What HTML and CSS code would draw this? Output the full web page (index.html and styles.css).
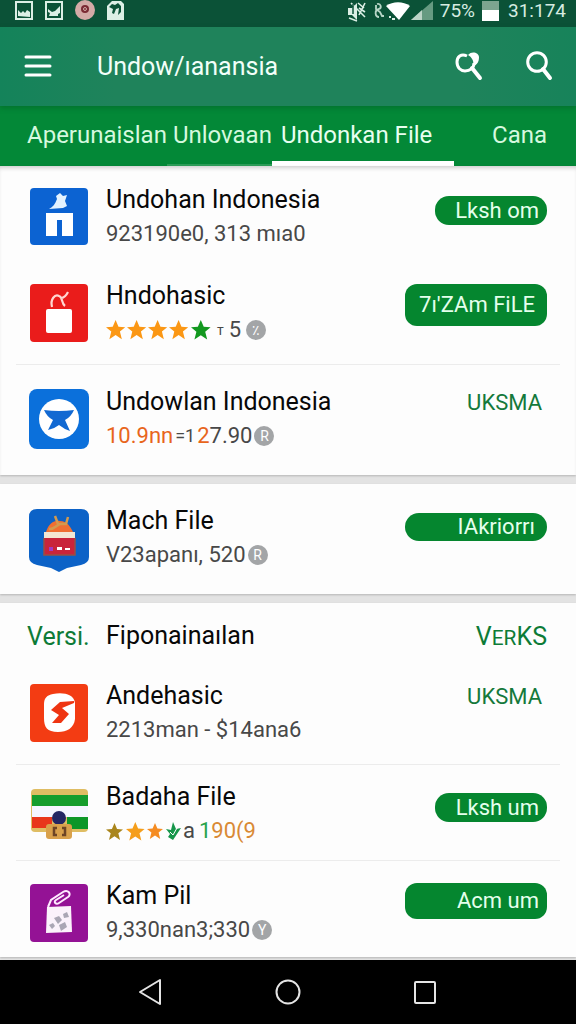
FILE: index.html
```html
<!DOCTYPE html>
<html lang="id">
<head>
<meta charset="utf-8">
<meta name="viewport" content="width=device-width, initial-scale=1">
<title>Undowlanansia</title>
<link rel="stylesheet" href="styles.css">
</head>
<body>
<div class="status">
  <div class="status-left">
    <svg width="18" height="19" viewBox="0 0 18 19"><path d="M1 1h16v17H1z" fill="none" stroke="#dcefe5" stroke-width="2"/><path d="M3 15V9l3 3 2-2 2 2 2-3 3 2v5z" fill="#dcefe5"/></svg>
    <svg width="18" height="19" viewBox="0 0 18 19"><path d="M1 1h16v17H1z" fill="none" stroke="#dcefe5" stroke-width="2"/><path d="M3 8l4 3 3-1 5-5v7l-2 1v2H4l1-3-2-1z" fill="#dcefe5"/></svg>
    <svg width="20" height="20" viewBox="0 0 20 20"><circle cx="10" cy="10" r="10" fill="#d3aaa6"/><circle cx="10" cy="9" r="4" fill="#7a2a33"/><circle cx="10" cy="9" r="1.5" fill="none" stroke="#d3aaa6"/></svg>
    <svg width="17" height="19" viewBox="0 0 17 19"><path d="M1 4l4-4h9l3 3v16H0V5z" fill="#dcefe5"/><path d="M2 6l3-3 3 1 3-2 3 3v6l-3 3 1-7-3 1-2 5-2-1 1-4z" fill="#0b5237"/></svg>
  </div>
  <div class="status-right">
    <svg width="19" height="21" viewBox="0 0 19 21"><path d="M1 7h4l5-5v17l-5-5H1z" fill="#dcefe5"/><path d="M4 2l14 14M11 2l6 5M12 7l6 4M18 2l-6 12M2 17l8 3" stroke="#dcefe5" stroke-width="1.6" fill="none"/><path d="M6 3v10" stroke="#0b5237" stroke-width="1.5"/></svg>
    <svg class="status-link" width="11" height="19" viewBox="0 0 11 19"><path d="M3 2c4-1 5 4 2 5-5 1-4 8 0 8M2 3v4l4 3 2 4h2" stroke="#b8d6c7" stroke-width="1.8" fill="none"/></svg>
    <svg width="24" height="19" viewBox="0 0 24 19"><path d="M0 4C7-1 17-1 24 4L13 18z" fill="#fff"/><path d="M3 15h2M6 17h3" stroke="#dcefe5" stroke-width="2"/></svg>
    <svg width="22" height="20" viewBox="0 0 22 20"><path d="M0 19L22 0v19z" fill="#669a81"/><path d="M0 19l11-10v10z" fill="#bcd4c7"/></svg>
    <span class="battery-text">75%</span>
    <svg width="17" height="20" viewBox="0 0 17 20"><path d="M0 0h17v20H0z" fill="#7ca58f"/><path d="M0 9h17v11H0z" fill="#fff"/></svg>
    <span class="clock">31:174</span>
  </div>
</div>

<header class="appbar">
  <button class="icon-btn" aria-label="Menu"><svg width="28" height="24" viewBox="0 0 28 24"><path d="M2 2h24M2 11h24M2 20h24" stroke="#fff" stroke-width="3" stroke-linecap="round"/></svg></button>
  <h1 class="appbar-title">Undow/ıanansia</h1>
  <button class="icon-btn" aria-label="Cari suara"><svg width="30" height="32" viewBox="0 0 30 32"><path d="M13 5C7 2 3 6 3 11c0 6 4 9 8 9 5 0 9-3 9-8" fill="none" stroke="#fff" stroke-width="3"/><path d="M14 4c4-5 11-2 11 2 0 5-2 8-6 9 1-4 0-8-5-11z" fill="#fff"/><path d="M18 17l8 10" stroke="#fff" stroke-width="4" stroke-linecap="round"/></svg></button>
  <button class="icon-btn" aria-label="Cari"><svg width="30" height="32" viewBox="0 0 30 32"><circle cx="13" cy="11" r="9.3" fill="none" stroke="#fff" stroke-width="3"/><path d="M19 18l7 9" stroke="#fff" stroke-width="4" stroke-linecap="round"/></svg></button>
</header>

<nav class="tabs">
  <a class="tab" href="#a">Aperunaislan</a>
  <a class="tab tab-near" href="#b">Unlovaan</a>
  <a class="tab tab-active" href="#c" aria-current="page">Undonkan File</a>
  <a class="tab tab-last" href="#d">Cana</a>
</nav>

<main class="content">
  <section class="card card-first">
    <article class="row">
      <svg class="app-icon" viewBox="0 0 60 60"><rect x="1" y="1" width="58" height="57" rx="4" fill="#0c63d2"/><path d="M20 22c4-2 6-5 8-10l-1-3 4-3 3 3 4-1-2 6 2 5-4 2z" fill="#e4f3ff"/><path d="M17 26h27v23H33V33h-5v16H17z" fill="#fff"/></svg>
      <div class="info"><h2 class="name">Undohan Indonesia</h2><p class="meta">923190e0, 313 mıa0</p></div>
      <button class="pill pill-small">Lksh om</button>
    </article>
    <article class="row row-divided">
      <svg class="app-icon" viewBox="0 0 60 60"><rect x="1" y="1" width="58" height="58" rx="4" fill="#ea1c1b"/><path d="M23 24c-2-8 3-13 7-11 4 1 2 7 6 10M32 15c3 0 5-2 7-6" fill="none" stroke="#ffd7d2" stroke-width="2.2"/><rect x="17" y="26" width="26" height="24" rx="2" fill="#fff"/></svg>
      <div class="info"><h2 class="name">Hndohasic</h2>
        <p class="meta"><svg class="stars" width="106" height="20" viewBox="0 0 106 20"><defs><path id="star" d="M10 0l3 7 7 .5-5.500 4.500 2 8L10 15.500 3.500 20l2-8L0 7.500 7 7z"/></defs><use href="#star" transform="translate(0 0) scale(.96)" fill="#fb9714"/><use href="#star" transform="translate(21 0) scale(.96)" fill="#fb9714"/><use href="#star" transform="translate(42 0) scale(.96)" fill="#fb9714"/><use href="#star" transform="translate(63 0) scale(.96)" fill="#fb9714"/><use href="#star" transform="translate(85 0) scale(.98)" fill="#12981f"/></svg><small class="tick">т</small><span>5</span><span class="badge">٪</span></p></div>
      <button class="pill pill-large">7ı'ZAm FiLE</button>
    </article>
    <article class="row row-roomy">
      <svg class="app-icon" viewBox="0 0 60 60"><rect width="60" height="60" rx="8" fill="#0b70db"/><circle cx="30" cy="30" r="20" fill="#fff"/><path d="M15 21q15 2 30 0-3 7-9 10l5 11q-6-2-11-6-5 4-11 5l5-10q-6-3-9-10z" fill="#1269d2"/></svg>
      <div class="info"><h2 class="name">Undowlan Indonesia</h2><p class="meta meta-tight"><span class="orange">10.9nn</span><small class="thin">=1</small><span><span class="orange">2</span>7.90</span><span class="badge">R</span></p></div>
      <button class="link-btn">UKSMA</button>
    </article>
  </section>

  <section class="card">
    <article class="row row-roomy">
      <svg class="app-icon app-icon-tall" viewBox="0 0 60 64"><path d="M8 1h44q8 0 8 8v40q0 6-8 8l-14 3-8 4-8-4-14-3q-8-2-8-8V9q0-8 8-8z" fill="#0c62c7"/><path d="M17 24c3-9 8-12 14-11 7 0 10 5 13 11z" fill="#ef6f32"/><path d="M26 8l3 8 8 0 2-7M20 21c7 1 8-7 15-5" fill="none" stroke="#d39a4e" stroke-width="2.500"/><path d="M15 24h31v6H15z" fill="#f4e7d4"/><path d="M15 30h31v17H15z" fill="#c9243b"/><path d="M15 30v17h31V30" fill="none" stroke="#985044" stroke-width="1.500"/><path d="M20 39h4v4h-4z" fill="#a33ac2"/><path d="M28 39h5v3h-5zM36 40h5v2h-5z" fill="#fff"/></svg>
      <div class="info"><h2 class="name">Mach File</h2><p class="meta meta-tight">V23apanı, 520<span class="badge">R</span></p></div>
      <button class="pill pill-wide">IAkriorrı</button>
    </article>
  </section>

  <section class="card">
    <div class="section-head"><a class="version" href="#versi">Versi.</a><h2 class="name">Fiponainaılan</h2><a class="more" href="#verks">V<small>ER</small>KS</a></div>
    <article class="row row-divided">
      <svg class="app-icon" viewBox="0 0 60 60"><rect x="1" y="1" width="58" height="58" rx="4" fill="#f33c13"/><path d="M24 11c10-2 21 0 22 9v16c-1 9-8 13-17 13-11 0-14-5-14-14V21c0-6 3-9 9-10z" fill="#fff"/><path d="M45 18l-14 1-9 8 8 5-7 8 9 0 8-9-7-6 12-5z" fill="#ef3512"/></svg>
      <div class="info"><h2 class="name">Andehasic</h2><p class="meta">2213man - $14ana6</p></div>
      <button class="link-btn">UKSMA</button>
    </article>
    <article class="row row-line">
      <svg class="app-icon" viewBox="0 0 60 60"><rect x="2" y="5" width="57" height="43" rx="4" fill="#dfbd63"/><path d="M3 11h56v11H3z" fill="#159d2d"/><path d="M3 22h56v11H3z" fill="#f5f6ff"/><path d="M3 33h20v11H3z" fill="#e8361b"/><path d="M38 33h21v12H38z" fill="#0c9628"/><circle cx="30" cy="34" r="7" fill="#242663"/><rect x="17" y="40" width="26" height="15" rx="3" fill="#d9a14c"/><path d="M28 44h-3v7h3M33 44h3v7h-3" fill="none" stroke="#6d4425" stroke-width="2.500"/></svg>
      <div class="info"><h2 class="name">Badaha File</h2><p class="meta meta-tight"><svg class="stars" width="75" height="20" viewBox="0 0 75 20"><use href="#star" transform="translate(0 2) scale(.85)" fill="#a9851c"/><use href="#star" transform="translate(20 1) scale(.93)" fill="#f59e1b"/><use href="#star" transform="translate(41 2) scale(.8)" fill="#f58c22"/><path d="M60 8l5 1 2-8 3 7 5-1-4 6-4 6-5-3 2-3z" fill="#16964a"/><path d="M64 11l3 3 4-7" fill="none" stroke="#fff" stroke-width="1"/></svg><span>a</span><span class="count"><span class="green">1</span>90(9</span></p></div>
      <button class="pill pill-small">Lksh um</button>
    </article>
    <article class="row row-last">
      <svg class="app-icon" viewBox="0 0 60 60"><rect x="1" y="1" width="58" height="58" rx="4" fill="#941295"/><path d="M19 24l3-7 12-8c5-3 9 2 5 5l-9 6c-3 2-6-1-3-3l8-5" fill="none" stroke="#ffeaff" stroke-width="2"/><path d="M18 24l24-1 1 26-26 1z" fill="#fbf2fb"/><path d="M25 35l5-2 3 4-4 4zM34 31l4-2 2 5-5 1zM20 42l4-2 2 3-3 3zM30 42l6-3 2 5-6 4z" fill="#aaa6b4"/></svg>
      <div class="info"><h2 class="name">Kam Pil</h2><p class="meta meta-tight">9,330nan3;330<span class="badge">Y</span></p></div>
      <button class="pill pill-medium">Acm um</button>
    </article>
  </section>
</main>

<footer class="sysnav">
  <button class="icon-btn" aria-label="Kembali"><svg width="28" height="28" viewBox="0 0 28 28"><path d="M22 2v24L2 14z" fill="none" stroke="#e4e4e4" stroke-width="2" stroke-linejoin="round"/></svg></button>
  <button class="icon-btn" aria-label="Beranda"><svg width="28" height="28" viewBox="0 0 28 28"><circle cx="14" cy="14" r="11.500" fill="none" stroke="#e4e4e4" stroke-width="2"/></svg></button>
  <button class="icon-btn" aria-label="Terbaru"><svg width="28" height="28" viewBox="0 0 28 28"><rect x="5" y="4" width="20" height="21" rx="1" fill="none" stroke="#e4e4e4" stroke-width="2"/></svg></button>
</footer>
</body>
</html>
```
FILE: styles.css
```css
* { box-sizing: border-box; }

body {
  margin: 0;
  min-height: 100vh;
  display: flex;
  flex-direction: column;
  background: #fdfdfd;
  color: #080808;
  font-family: Roboto, "Noto Sans", sans-serif;
}

h1, h2, p { margin: 0; font-weight: 400; }
a { text-decoration: none; color: inherit; }
svg { display: block; flex: none; }

button {
  border: 0;
  padding: 0;
  margin: 0;
  background: none;
  font: inherit;
  color: inherit;
}

.status {
  display: flex;
  justify-content: space-between;
  align-items: flex-start;
  height: 27px;
  padding: 0 10px 0 15px;
  background: #0b5237;
  color: #d6ece1;
}

.status-left { display: flex; align-items: center; gap: 12px; }
.status-right { display: flex; align-items: center; gap: 1px; font-size: 19px; line-height: 22px; }
.status-link { margin-left: 7px; }
.battery-text { margin: 0 6px; }
.clock { margin-left: 8px; }

.appbar {
  display: flex;
  align-items: center;
  height: 79px;
  padding: 0 22px 0 24px;
  background: linear-gradient(90deg, #14835a, #1f835b 20%, #1f835b 80%, #17835a);
  color: #f2fff9;
  box-shadow: 0 2px 5px #00502066;
  position: relative;
}

.appbar-title {
  flex: 1;
  margin-left: 45px;
  font-size: 25px;
  line-height: 36px;
}

.icon-btn { display: grid; place-items: center; }
.appbar .icon-btn + .icon-btn { margin-left: 40px; }

.tabs {
  display: flex;
  height: 60px;
  padding: 0 29px 0 27px;
  background: #038837;
  color: #d5f9df;
  font-size: 24px;
  line-height: 58px;
  white-space: nowrap;
}

.tab { border-bottom: 5px solid transparent; }
.tab-near { padding: 0 0 0 6px; border-bottom: 2px solid #2c9d58; }
.tab-active { padding: 0 22px 0 9px; border-color: #fff; color: #e8fff0; }
.tab-last { margin-left: auto; }

.content { flex: 1; background: #e3e3e3; }

.card {
  background: #fdfdfd;
  box-shadow: 0 1px 2px #00000033;
}

.card + .card { margin-top: 9px; }

.card-first {
  padding-top: 1px;
  box-shadow: inset 0 4px 4px -2px #00000030, 0 1px 2px #00000033;
}

.row {
  display: flex;
  align-items: flex-start;
  margin: 0 16px;
  padding: 16px 13px 12px;
  border-bottom: 0 solid #ececec;
}

.row-divided { padding-bottom: 17px; border-bottom-width: 1px; }
.row-line { padding-top: 15px; border-bottom-width: 1px; }
.row-roomy { padding-top: 20px; padding-bottom: 22px; }
.row-last { padding-top: 18px; padding-bottom: 10px; }

.app-icon { width: 60px; height: 60px; margin: 4px 17px 4px 0; }
.app-icon-tall { height: 64px; margin-bottom: 0; }
.info { flex: 1; min-width: 0; }

.name {
  font-size: 25px;
  line-height: 34px;
  white-space: nowrap;
}

.meta {
  display: flex;
  align-items: center;
  gap: 5px;
  height: 34px;
  color: #484848;
  font-size: 22px;
  line-height: 34px;
  white-space: nowrap;
}

.meta-tight { gap: 2px; }

.tick { font-size: 14px; }
.thin { font-size: 18px; }
.orange { color: #e8651c; }
.green { color: #28a34b; }
.count { color: #d98a35; margin-left: 2px; }

.badge {
  display: grid;
  place-items: center;
  width: 20px;
  height: 20px;
  border-radius: 50%;
  background: #a3a5a7;
  color: #fff;
  font-size: 14px;
  line-height: 20px;
}

.pill {
  flex: none;
  width: 142px;
  padding-right: 8px;
  border-radius: 14px;
  background: #05862f;
  color: #e4ffec;
  font-size: 22px;
  line-height: 28px;
  text-align: right;
  white-space: nowrap;
}

.pill-small { width: 112px; height: 29px; margin-top: 13px; }
.pill-large { height: 42px; margin-top: 5px; padding-right: 12px; border-radius: 12px; }
.pill-wide { height: 28px; margin-top: 9px; padding-right: 12px; }
.pill-medium { height: 36px; margin-top: 4px; border-radius: 12px; }

.link-btn {
  margin: 4px 5px 0 0;
  color: #14793b;
  font-size: 22px;
  line-height: 28px;
}

.section-head {
  display: flex;
  align-items: center;
  height: 60px;
  padding: 6px 29px 0 27px;
  font-size: 25px;
  color: #0d7b37;
}

.section-head .name { flex: 1; color: #080808; }
.version { width: 79px; }

.sysnav {
  display: flex;
  justify-content: space-between;
  align-items: center;
  height: 64px;
  padding: 0 24%;
  background: #000;
}
```
